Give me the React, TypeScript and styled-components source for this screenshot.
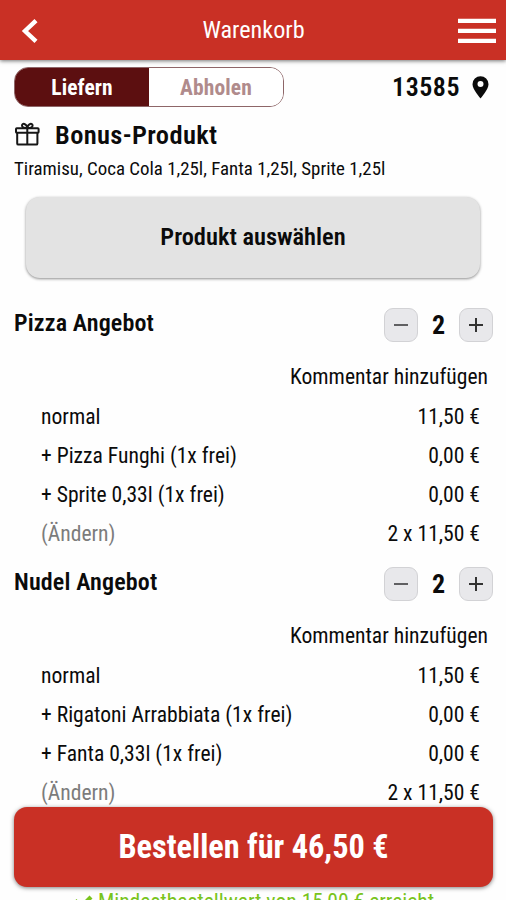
import React from "react";
import styled, { createGlobalStyle } from "styled-components";

const GlobalStyle = createGlobalStyle`
  *, *::before, *::after { box-sizing: border-box; }
  html, body { margin: 0; height: 100%; overflow: hidden; background: #fefefe; }
  body, button {
    font-family: "Roboto Condensed", Roboto, "Liberation Sans", sans-serif;
    font-stretch: 75%;
    color: #0b0b0b;
  }
  button { border: 0; padding: 0; margin: 0; background: none; }
  h1, h2, h3, p, ul { margin: 0; padding: 0; font-weight: inherit; }
`;

const Screen = styled.div`
  position: relative;
  display: flex;
  flex-direction: column;
  height: 900px;
  width: 506px;
  overflow: hidden;
  background: #fefefe;
`;

const Header = styled.header`
  display: grid;
  grid-template-columns: 60px 1fr 60px;
  align-items: center;
  flex: none;
  height: 60px;
  background: #c93025;
  color: #fff;
  box-shadow: 0 1px 4px rgba(0, 0, 0, 0.55);
`;

const HeaderButton = styled.button<{ $end?: boolean }>`
  display: flex;
  justify-content: ${(p) => (p.$end ? "flex-end" : "flex-start")};
  padding: ${(p) => (p.$end ? "1px 10px 0 0" : "1px 0 0 20px")};
`;

const HeaderTitle = styled.h1`
  padding-left: 1px;
  text-align: center;
  font-size: 24.2px;
  line-height: 30px;
  font-weight: 450;
`;

const DeliveryBar = styled.div`
  display: flex;
  align-items: center;
  justify-content: space-between;
  flex: none;
  height: 40px;
  margin: 7px 17px 0 14px;
`;

const Toggle = styled.div`
  display: flex;
  width: 270px;
  height: 40px;
  border: 1px solid #8e6668;
  border-radius: 14px;
  overflow: hidden;
`;

const ToggleOption = styled.button<{ $active?: boolean }>`
  flex: 1;
  font-size: 21.5px;
  font-weight: 700;
  letter-spacing: 0.1px;
  background: ${(p) => (p.$active ? "#5c0f10" : "#fff")};
  color: ${(p) => (p.$active ? "#fff" : "#b08b8c")};
`;

const PostalCode = styled.div`
  display: flex;
  align-items: center;
  gap: 12px;
  font-size: 26px;
  font-weight: 600;
  letter-spacing: 0.5px;
`;

const BonusTitle = styled.h2`
  display: flex;
  align-items: center;
  gap: 15px;
  flex: none;
  height: 32px;
  margin: 11px 14px 0;
  font-size: 26.5px;
  font-weight: 600;
  letter-spacing: 0.35px;
`;

const BonusText = styled.p`
  flex: none;
  margin: 7px 14px 0;
  font-size: 18.9px;
  line-height: 24px;
`;

const SelectButton = styled.button`
  flex: none;
  height: 81px;
  margin: 16px 26px 0;
  padding-bottom: 2px;
  border-radius: 14px;
  background: #e3e3e3;
  box-shadow: 0 1px 3px rgba(0, 0, 0, 0.45);
  font-size: 24.4px;
  font-weight: 600;
`;

const ProductList = styled.div`
  display: flex;
  flex-direction: column;
  flex: none;
  margin-top: 30px;
`;

const Product = styled.section`
  height: 259px;
`;

const ProductHeader = styled.div`
  display: flex;
  align-items: flex-start;
  justify-content: space-between;
  height: 34px;
  padding: 0 13px 0 14px;
`;

const ProductName = styled.h3`
  font-size: 24px;
  line-height: 30px;
  font-weight: 600;
  letter-spacing: 0.15px;
`;

const Stepper = styled.div`
  display: grid;
  grid-template-columns: 34px 41px 34px;
  align-items: center;
`;

const StepButton = styled.button`
  display: flex;
  align-items: center;
  justify-content: center;
  height: 34px;
  border: 1px solid #d2d2d5;
  border-radius: 9px;
  background: #e8e8eb;
`;

const Quantity = styled.span`
  text-align: center;
  font-size: 26px;
  line-height: 34px;
  font-weight: 700;
`;

const Comment = styled.p`
  margin-top: 20px;
  padding-right: 18px;
  text-align: right;
  font-size: 21.6px;
  line-height: 30px;
`;

const Lines = styled.ul`
  list-style: none;
  margin-top: 5px;
  padding: 0 26px 0 41px;
`;

const Line = styled.li`
  display: flex;
  align-items: center;
  justify-content: space-between;
  height: 39px;
  font-size: 21.6px;
`;

const LineLabel = styled.span<{ $muted?: boolean }>`
  color: ${(p) => (p.$muted ? "#7c7c7c" : "inherit")};
`;

const Footer = styled.footer`
  position: absolute;
  left: 14px;
  right: 13px;
  top: 807px;
  display: flex;
  flex-direction: column;
`;

const OrderButton = styled.button`
  height: 80px;
  border-radius: 13px;
  background: #c93025;
  box-shadow: 0 1px 4px rgba(0, 0, 0, 0.5);
  color: #fff;
  font-size: 32.3px;
  font-weight: 750;
`;

const Minimum = styled.p`
  display: flex;
  align-items: center;
  justify-content: center;
  gap: 5px;
  height: 29px;
  color: #79c41c;
  font-size: 21.6px;
  white-space: nowrap;
`;

const products = [
  { name: "Pizza Angebot", extras: ["+ Pizza Funghi (1x frei)", "+ Sprite 0,33l (1x frei)"] },
  { name: "Nudel Angebot", extras: ["+ Rigatoni Arrabbiata (1x frei)", "+ Fanta 0,33l (1x frei)"] },
];

const StepIcon = ({ plus }: { plus?: boolean }) => (
  <svg width="16" height="16" viewBox="0 0 16 16" stroke={plus ? "#333" : "#606062"} strokeWidth="2">
    <path d={plus ? "M1 8H15M8 1V15" : "M1 8H15"} />
  </svg>
);

export default function App() {
  return (
    <Screen>
      <GlobalStyle />
      <Header>
        <HeaderButton aria-label="Zurück">
          <svg width="20" height="26" viewBox="0 0 20 26" fill="none" stroke="#fff" strokeWidth="4.4">
            <path d="M16 2.6L5 13L16 23.4" />
          </svg>
        </HeaderButton>
        <HeaderTitle>Warenkorb</HeaderTitle>
        <HeaderButton $end aria-label="Menü">
          <svg width="38" height="26" viewBox="0 0 38 26" fill="#fff">
            <path d="M0 .8H38V5H0zM0 10.8H38V15H0zM0 20.8H38V25H0z" />
          </svg>
        </HeaderButton>
      </Header>
      <DeliveryBar>
        <Toggle>
          <ToggleOption $active>Liefern</ToggleOption>
          <ToggleOption>Abholen</ToggleOption>
        </Toggle>
        <PostalCode>
          13585
          <svg width="17" height="23" viewBox="0 0 17 23">
            <path
              fill="#0b0b0b"
              fillRule="evenodd"
              d="M8.5.2A8 8 0 0 0 .5 8.2C.5 13.5 8.5 22.4 8.5 22.4S16.5 13.5 16.5 8.2A8 8 0 0 0 8.5.2ZM8.5 5.1A3 3 0 1 1 8.5 11.1A3 3 0 1 1 8.5 5.1Z"
            />
          </svg>
        </PostalCode>
      </DeliveryBar>
      <BonusTitle>
        <svg width="26" height="24" viewBox="0 0 26 24" fill="none" stroke="#161616" strokeWidth="2">
          <rect x="2" y="6.2" width="22.6" height="4.6" rx="0.8" />
          <path
            d="M3.2 11V21.4Q3.2 22.6 4.4 22.6H22.2Q23.4 22.6 23.4 21.4V11M13.3 6V22.6M13.3 6C11.5 6 8 5.4 8 3.4C8 .8 12.6 1.2 13.3 6C14 1.2 18.6 .8 18.6 3.4C18.6 5.4 15.1 6 13.3 6"
            strokeLinejoin="round"
          />
        </svg>
        Bonus-Produkt
      </BonusTitle>
      <BonusText>Tiramisu, Coca Cola 1,25l, Fanta 1,25l, Sprite 1,25l</BonusText>
      <SelectButton>Produkt auswählen</SelectButton>
      <ProductList>
        {products.map((product) => (
          <Product key={product.name}>
            <ProductHeader>
              <ProductName>{product.name}</ProductName>
              <Stepper>
                <StepButton aria-label="Weniger"><StepIcon /></StepButton>
                <Quantity>2</Quantity>
                <StepButton aria-label="Mehr"><StepIcon plus /></StepButton>
              </Stepper>
            </ProductHeader>
            <Comment>Kommentar hinzufügen</Comment>
            <Lines>
              <Line><LineLabel>normal</LineLabel><span>11,50 €</span></Line>
              {product.extras.map((extra) => (
                <Line key={extra}><LineLabel>{extra}</LineLabel><span>0,00 €</span></Line>
              ))}
              <Line><LineLabel $muted>(Ändern)</LineLabel><span>2 x 11,50 €</span></Line>
            </Lines>
          </Product>
        ))}
      </ProductList>
      <Footer>
        <OrderButton>Bestellen für 46,50 €</OrderButton>
        <Minimum>
          <svg width="20" height="16" viewBox="0 0 20 16" fill="none" stroke="#79c41c" strokeWidth="4.2">
            <path d="M2 6.5L8 13L18 3" />
          </svg>
          Mindestbestellwert von 15,00 € erreicht
        </Minimum>
      </Footer>
    </Screen>
  );
}
